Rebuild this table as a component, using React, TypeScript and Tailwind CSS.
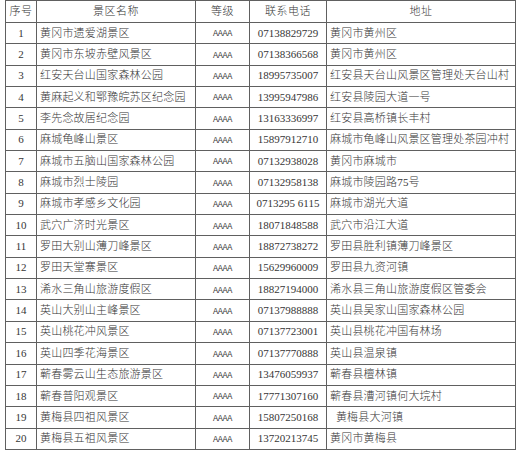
import React from "react";

const rows: [string, string, string, string][] = [
  ["1", "黄冈市遗爱湖景区", "07138829729", "黄冈市黄州区"],
  ["2", "黄冈市东坡赤壁风景区", "07138366568", "黄冈市黄州区"],
  ["3", "红安天台山国家森林公园", "18995735007", "红安县天台山风景区管理处天台山村"],
  ["4", "黄麻起义和鄂豫皖苏区纪念园", "13995947986", "红安县陵园大道一号"],
  ["5", "李先念故居纪念园", "13163336997", "红安县高桥镇长丰村"],
  ["6", "麻城龟峰山景区", "15897912710", "麻城市龟峰山风景区管理处茶园冲村"],
  ["7", "麻城市五脑山国家森林公园", "07132938028", "黄冈市麻城市"],
  ["8", "麻城市烈士陵园", "07132958138", "麻城市陵园路75号"],
  ["9", "麻城市孝感乡文化园", "0713295 6115", "麻城市湖光大道"],
  ["10", "武穴广济时光景区", "18071848588", "武穴市沿江大道"],
  ["11", "罗田大别山薄刀峰景区", "18872738272", "罗田县胜利镇薄刀峰景区"],
  ["12", "罗田天堂寨景区", "15629960009", "罗田县九资河镇"],
  ["13", "浠水三角山旅游度假区", "18827194000", "浠水县三角山旅游度假区管委会"],
  ["14", "英山大别山主峰景区", "07137988888", "英山县吴家山国家森林公园"],
  ["15", "英山桃花冲风景区", "07137723001", "英山县桃花冲国有林场"],
  ["16", "英山四季花海景区", "07137770888", "英山县温泉镇"],
  ["17", "蕲春雾云山生态旅游景区", "13476059937", "蕲春县檀林镇"],
  ["18", "蕲春普阳观景区", "17771307160", "蕲春县漕河镇何大垸村"],
  ["19", "黄梅县四祖风景区", "15807250168", "  黄梅县大河镇"],
  ["20", "黄梅县五祖风景区", "13720213745", "黄冈市黄梅县"],
];

const font = { fontFamily: '"Liberation Serif", "Noto Sans CJK SC", serif' };

export default function App() {
  return (
    <div className="w-[519px] h-[455px] bg-white pl-[5px] pt-0">
      <table
        className="table-fixed border-collapse w-[510px] text-[11px] leading-none text-[#363636] font-light"
        style={font}
      >
        <colgroup>
          <col className="w-[31px]" />
          <col className="w-[159px]" />
          <col className="w-[54px]" />
          <col className="w-[77px]" />
          <col className="w-[189px]" />
        </colgroup>
        <thead>
          <tr className="h-[22px]">
            <th className="border border-[#606060] p-0 font-light text-center tracking-[0.5px]">序号</th>
            <th className="border border-[#606060] p-0 font-light text-center tracking-[0.5px]">景区名称</th>
            <th className="border border-[#606060] p-0 font-light text-center tracking-[0.5px]">等级</th>
            <th className="border border-[#606060] p-0 font-light text-center tracking-[0.5px]">联系电话</th>
            <th className="border border-[#606060] p-0 font-light text-center tracking-[0.5px]">地址</th>
          </tr>
        </thead>
        <tbody>
          {rows.map((r) => (
            <tr key={r[0]} className="h-[21.35px]">
              <td className="border border-[#606060] p-0 text-center">{r[0]}</td>
              <td className="border border-[#606060] p-0 pl-[3px] tracking-[0.2px] whitespace-nowrap">{r[1]}</td>
              <td className="border border-[#606060] p-0 text-center">
                <span className="text-[8.5px] tracking-[-0.3px]" style={{ fontFamily: '"Liberation Mono", monospace' }}>AAAA</span>
              </td>
              <td className="border border-[#606060] p-0 text-center whitespace-pre">{r[2]}</td>
              <td className="border border-[#606060] p-0 pl-[3px] tracking-[0.2px] whitespace-pre">{r[3]}</td>
            </tr>
          ))}
        </tbody>
      </table>
    </div>
  );
}
